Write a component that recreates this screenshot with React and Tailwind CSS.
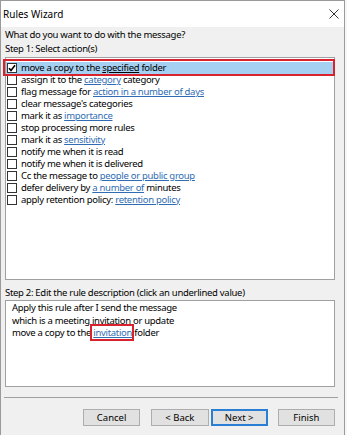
import React from "react";

const F = { fontFamily: "'Noto Sans', 'Open Sans', sans-serif" };

function L({ children }) {
  return <span className="text-[#2f6cb3] underline underline-offset-[1px]">{children}</span>;
}

function Box({ checked }) {
  return (
    <div className="w-[10px] h-[10px] border border-[#333] bg-white flex items-center justify-center shrink-0">
      {checked && (
        <svg width="8" height="8" viewBox="0 0 8 8">
          <path d="M1 4.2 L3 6.4 L7 1.2" stroke="#000" strokeWidth="1.6" fill="none" />
        </svg>
      )}
    </div>
  );
}

const items = [
  [<>move a copy to the <span className="underline">specified</span> folder</>, true],
  [<>assign it to the <L>category</L> category</>],
  [<>flag message for <L>action in a number of days</L></>],
  [<>clear message's categories</>],
  [<>mark it as <L>importance</L></>],
  [<>stop processing more rules</>],
  [<>mark it as <L>sensitivity</L></>],
  [<>notify me when it is read</>],
  [<>notify me when it is delivered</>],
  [<>Cc the message to <L>people or public group</L></>],
  [<>defer delivery by <L>a number of</L> minutes</>],
  [<>apply retention policy: <L>retention policy</L></>],
];

function Btn({ children, primary, cls }) {
  return (
    <div
      className={`h-[17px] w-[58px] flex items-center justify-center bg-[#e1e1e1] text-[9.5px] text-black ${
        primary ? "border-2 border-[#2a7fd4]" : "border border-[#adadad]"
      } ${cls || ""}`}
    >
      {children}
    </div>
  );
}

export default function App() {
  return (
    <div className="w-[347px] h-[435px] bg-[#f7f7f7] text-black" style={F}>
      <div className="w-[345px] h-[435px] border border-[#9a9a9a] border-b-0 bg-[#f0f0f0] flex flex-col">
        <div className="h-[26px] bg-white flex items-center justify-between pl-[2px] pr-[5px] shrink-0">
          <span className="text-[10px]">Rules Wizard</span>
          <svg width="10" height="10" viewBox="0 0 10 10">
            <path d="M0.5 0.5 L9.5 9.5 M9.5 0.5 L0.5 9.5" stroke="#333" strokeWidth="1" />
          </svg>
        </div>
        <div className="flex flex-col pl-[4px] pr-[9px] text-[9.5px] leading-[12px] tracking-[-0.3px]">
          <div className="mt-[2px] h-[12px]">What do you want to do with the message?</div>
          <div className="mt-[2px] h-[12px]">Step 1: Select action(s)</div>
          <div className="relative mt-[2px] h-[223px] w-[330px] bg-white border border-[#a0a0a0] pt-[4px]">
            {items.map(([t, c], i) => (
              <div
                key={i}
                className={`h-[12px] flex items-center gap-[4px] ${c ? "bg-[#a6d0f2]" : ""}`}
              >
                <div className="pl-[1px]">
                  <Box checked={c} />
                </div>
                <span className="whitespace-nowrap">{t}</span>
              </div>
            ))}
            <div className="absolute left-[-3px] top-[1px] w-[332px] h-[17px] border-2 border-[#d8232e]" />
          </div>
          <div className="mt-[7px] h-[12px]">Step 2: Edit the rule description (click an underlined value)</div>
          <div className="mt-[1px] h-[87px] w-[330px] bg-white border border-[#a0a0a0] pl-[6px] pt-[1px] leading-[12.5px]">
            <div>Apply this rule after I send the message</div>
            <div>which is a meeting invitation or update</div>
            <div>
              move a copy to the{" "}
              <span className="relative">
                <L>invitation</L>
                <span className="absolute left-[-3px] right-[-2px] top-[-2px] bottom-[-2px] border-2 border-[#d8232e]" />
              </span>{" "}
              folder
            </div>
          </div>
          <div className="mt-[10px] h-[1px] bg-[#a0a0a0] w-[334px] -ml-[1px]" />
          <div className="mt-[11px] flex pl-[78px] tracking-normal">
            <Btn>Cancel</Btn>
            <Btn cls="ml-[11px]">&lt; Back</Btn>
            <Btn primary cls="ml-[2px]">Next &gt;</Btn>
            <Btn cls="ml-[10px]">Finish</Btn>
          </div>
        </div>
      </div>
    </div>
  );
}
